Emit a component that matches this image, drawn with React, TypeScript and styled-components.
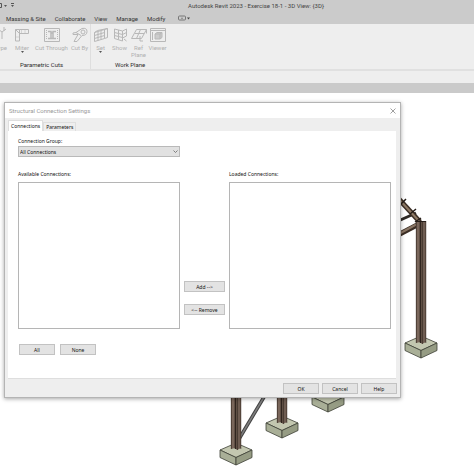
import React, { useState } from "react";
import styled, { createGlobalStyle } from "styled-components";

const Global = createGlobalStyle`
  * { box-sizing: border-box; }
  html, body { margin: 0; background: #fff; }
  body, button, select { font-family: "Noto Sans", "Open Sans", sans-serif; }
`;

const Page = styled.div`
  display: flex;
  flex-direction: column;
  min-height: 100vh;
  overflow: hidden;
`;

const TitleBar = styled.header`
  position: relative;
  display: flex;
  align-items: center;
  justify-content: center;
  height: 11px;
  padding-left: 38px;
  background: #cbcbcb;
  color: #444;
  font-family: Roboto, sans-serif;
  font-size: 6px;
  line-height: 10px;
`;

const QuickAccess = styled.svg`
  position: absolute;
  left: 0;
  top: 0;
`;

const TabBar = styled.nav`
  display: flex;
  align-items: center;
  gap: 9px;
  height: 13px;
  padding: 3px 0 0 6px;
  background: #cbcbcb;
`;

const RibbonTab = styled.button`
  border: 0;
  padding: 0;
  background: none;
  color: #333;
  font-family: Roboto, sans-serif;
  font-size: 6px;
  line-height: 8px;
`;

const Ribbon = styled.section`
  display: flex;
  height: 47px;
  background: #eee;
  border-bottom: 2px solid #e0e0e0;
`;

const RibbonPanel = styled.div<{ $width: number; $divider?: boolean }>`
  display: flex;
  flex-direction: column;
  justify-content: space-between;
  width: ${(p) => p.$width}px;
  overflow: hidden;
  border-right: 1px solid ${(p) => (p.$divider ? "#dedede" : "transparent")};
`;

const Tools = styled.div<{ $columns: string }>`
  display: grid;
  grid-template-columns: ${(p) => p.$columns};
  padding-top: 1px;
`;

const Tool = styled.button<{ $end?: boolean }>`
  display: flex;
  flex-direction: column;
  align-items: ${(p) => (p.$end ? "flex-end" : "center")};
  justify-content: flex-start;
  border: 0;
  padding: 0;
  background: none;
  color: #b0b0b0;
  font-family: Roboto, sans-serif;
  font-size: 6px;
  line-height: 7px;
  white-space: nowrap;
`;

const ToolIcon = styled.svg`
  flex: none;
  width: 16px;
  height: 19px;
  fill: none;
  stroke: #b8b8b8;
  stroke-width: 1;
`;

const Arrow = styled.svg`
  width: 3px;
  height: 2px;
  fill: #555;
`;

const PanelName = styled.div<{ $indent: number }>`
  padding-left: ${(p) => p.$indent}px;
  color: #2c2c2c;
  font-family: Roboto, sans-serif;
  font-size: 6px;
  line-height: 8px;
`;

const OptionsBar = styled.div`
  height: 12px;
  background: #eee;
`;

const ViewBar = styled.div`
  height: 10px;
  background: #cacaca;
`;

const Viewport = styled.main`
  position: relative;
  flex: 1;
  min-height: 376px;
  background: #fff;
`;

const Model = styled.svg`
  display: block;
`;

const Dialog = styled.section`
  position: absolute;
  left: 4px;
  right: 73px;
  top: 9px;
  border: 1px solid #b4b4b4;
  background: #eee;
  box-shadow: 0 1px 4px rgba(0, 0, 0, 0.35);
  color: #111;
  font-size: 5px;
`;

const DialogTitle = styled.header`
  display: flex;
  align-items: center;
  justify-content: space-between;
  height: 15px;
  padding: 0 4px;
  background: #fff;
  color: #999;
  font-family: Roboto, sans-serif;
  font-size: 6px;
  line-height: 8px;
`;

const Close = styled.button`
  display: flex;
  border: 0;
  padding: 0;
  background: none;
`;

const TabStrip = styled.div`
  display: flex;
  align-items: flex-end;
  height: 13px;
  padding-left: 3px;
`;

const DialogTab = styled.button<{ $active: boolean }>`
  height: ${(p) => (p.$active ? 11 : 9)}px;
  padding: 0 2px;
  border: 1px solid #dedede;
  border-bottom: 0;
  background: ${(p) => (p.$active ? "#fff" : "#eee")};
  color: #111;
  font-size: 5px;
  line-height: 8px;
`;

const Sheet = styled.div`
  display: flex;
  flex-direction: column;
  height: 248px;
  margin: 0 4px 0 3px;
  padding: 6px 5px 0 10px;
  border-bottom: 1px solid #dedede;
  background: #fff;
`;

const Transfer = styled.div`
  display: grid;
  grid-template-columns: 1fr 49px 1fr;
`;

const Field = styled.div`
  display: flex;
  flex-direction: column;
`;

const Label = styled.label`
  line-height: 8px;
`;

const GroupSelect = styled.div`
  position: relative;
  margin: 1px 0 13px;
`;

const Select = styled.select`
  display: block;
  appearance: none;
  width: 100%;
  height: 11px;
  padding: 0 1px;
  border: 1px solid #b9b9b9;
  border-radius: 0;
  background: #e1e1e1;
  color: #111;
  font-size: 5px;
  line-height: 8px;
`;

const Chevron = styled.svg`
  position: absolute;
  right: 2px;
  top: 4px;
  pointer-events: none;
`;

const List = styled.div`
  height: 147px;
  margin-top: 4px;
  border: 1px solid #b5b5b5;
  background: #fff;
`;

const Middle = styled.div`
  display: flex;
  flex-direction: column;
  align-items: center;
  gap: 12px;
  padding-top: 111px;
`;

const Button = styled.button<{ $width: number }>`
  width: ${(p) => p.$width}px;
  height: 11px;
  padding: 0;
  border: 1px solid #c2c2c2;
  background: #e3e3e3;
  color: #111;
  font-size: 5px;
  line-height: 8px;
`;

const Row = styled.div<{ $end?: boolean }>`
  display: flex;
  justify-content: ${(p) => (p.$end ? "flex-end" : "flex-start")};
  gap: ${(p) => (p.$end ? 3 : 5)}px;
  padding: ${(p) => (p.$end ? "4px 3px 3px" : "15px 0 0 1px")};
`;

const DownArrow = () => (
  <Arrow viewBox="0 0 3 2"><path d="M0 0H3L1.5 2Z" /></Arrow>
);

const icons: Record<string, React.ReactNode> = {
  Type: <path d="M0 4h7l4 3 4-3M5 5l-3 9M11 7v7M0 13h5M13 2v4" />,
  Miter: <><path d="M1.500 16V4.500h4V16zM5.500 8.500h9v-4h-9M1.500 4.500l4 4" /><path d="M7.500 4.500v4M11 4.500v4M1.500 12h4" strokeDasharray="1 1" /></>,
  "Cut Through": <><path d="M.5 3.500h15v13H.5z" /><path d="M4 6.500h3v1.500h2V6.500h3M4 13.500h8M7 8v5.500M9 8v5.500" strokeWidth="1.500" /><path d="M2.500 5v10M13.500 5v10" strokeDasharray="1 1" /></>,
  "Cut By": <><path d="M4 7.500l6-4q5-1 5 3 0 4-5 4l-5 6H2l4-7H1V8z" /><circle cx="11" cy="7" r="2" /><path d="M4 7.500l5 3" /></>,
  Set: <><path d="M1.500 7.500l10-3v9l-10 3zM4.500 5.500l10-2v9l-3 1M1.500 7.500l3-2M11.500 4.500l3-1" /><path d="M5 6.500v9M8 5.500v9M1.500 10.500l10-3M1.500 13.500l10-3" /></>,
  Show: <><path d="M2.500 4l8 2v10l-8-2.500zM10.500 6l4-2v7l-4 2M6.500 5v9.500M2.500 7.500l8 2 4-2M2.500 10.500l8 2" /><path d="M12 14l2.500 2" /></>,
  Ref: <><path d="M5.500 4.500h10l-5 9h-10zM4 8.500h9M9.500 4.500l-4 9" /><path d="M9 11v5h3M15.500 4.500v4" /></>,
  Viewer: <><path d="M.5 3.500h15v13H.5zM.5 5.500h15" /><path d="M5 9l2-1.500h5v5L10 14H5zM5 9h5v5M10 9l2-1.500" fill="#ccc" /><path d="M2.500 7v8" /></>,
};

const RibbonTool = ({ name, text = name, menu, end }: { name: string; text?: React.ReactNode; menu?: boolean; end?: boolean }) => (
  <Tool type="button" $end={end}>
    <ToolIcon viewBox="0 0 16 19">{icons[name]}</ToolIcon>
    <span>{text}</span>
    {menu && <DownArrow />}
  </Tool>
);

const Footing = ({ x, y }: { x: number; y: number }) => (
  <g transform={`translate(${x} ${y})`} stroke="#3d4036" strokeWidth=".8" strokeLinejoin="round">
    <path d="M-16-15L0-22 16-15 0-7.500z" fill="#c3c7b0" />
    <path d="M-16-15L0-7.500V0L-16-7.500z" fill="#a9af97" />
    <path d="M16-15L0-7.500V0L16-7.500z" fill="#969c84" />
  </g>
);

const Column = ({ x, top, bottom }: { x: number; top: number; bottom: number }) => (
  <g>
    <path d={`M${x - 5} ${top}H${x + 5}V${bottom - 1}L${x + 1} ${bottom + 1}L${x - 1} ${bottom - 1}L${x - 5} ${bottom}Z`} fill="#6f5d52" />
    <path d={`M${x - 0.5} ${top}V${bottom}`} stroke="#30251f" strokeWidth="1.500" />
    <path d={`M${x - 4.7} ${top}V${bottom}M${x + 1.5} ${top}V${bottom + 1}M${x + 4.8} ${top}V${bottom}`} stroke="#3a2e27" strokeWidth=".7" />
    <path d={`M${x - 3} ${top}V${bottom - 1}`} stroke="#8b776b" strokeWidth=".8" />
  </g>
);

const Structure = () => (
  <Model width="474" height="376" viewBox="0 0 474 376" aria-label="Steel structure">
    <Footing x={421} y={265} />
    <g fill="none">
      <path d="M396 129l20-9" stroke="#2e2925" strokeWidth="3" />
      <path d="M396 143l23-12" stroke="#3b2e25" strokeWidth="5" />
      <path d="M396 142.500l22-12" stroke="#8a7665" strokeWidth="2" />
      <path d="M396 103L420 129" stroke="#3b2e25" strokeWidth="5" />
      <path d="M396 103L419 128" stroke="#8f7b66" strokeWidth="2" />
      <path d="M401 111l5-5M410 121l6-5M415 129l6-4" stroke="#241c17" strokeWidth="1.500" />
    </g>
    <Column x={421} top={128} bottom={250} />
    <path d="M416 128.500h10" stroke="#241c17" />
    <Footing x={328} y={319} />
    <Column x={328} top={260} bottom={303} />
    <Footing x={282} y={345} />
    <Column x={282} top={280} bottom={330} />
    <Footing x={236} y={372} />
    <path d="M239 346L267 299" stroke="#414141" strokeWidth="3.500" />
    <path d="M239 346L267 299" stroke="#7d7d7d" strokeWidth="1.500" />
    <Column x={236} top={280} bottom={356} />
  </Model>
);

export default function App() {
  const [tab, setTab] = useState("Connections");
  return (
    <Page>
      <Global />
      <TitleBar>
        <QuickAccess width="16" height="11" viewBox="0 0 16 11" fill="none" stroke="#555">
          <path d="M0 3.500h1.500v4H0" />
          <path d="M4 5h3L5.500 7zM11 5h3l-1.500 2z" fill="#555" stroke="none" />
          <path d="M11 3.500h3" />
        </QuickAccess>
        Autodesk Revit 2023 - Exercise 18-1 - 3D View: {"{3D}"}
      </TitleBar>
      <TabBar>
        {["Massing & Site", "Collaborate", "View", "Manage", "Modify"].map((t) => (
          <RibbonTab type="button" key={t}>{t}</RibbonTab>
        ))}
        <RibbonTab type="button" aria-label="Minimize ribbon">
          <svg width="16" height="6" viewBox="0 0 16 6" fill="none" stroke="#777">
            <rect x="4.500" y="1" width="7" height="4" rx="1" />
            <path d="M7 3.500l1-1 1 1zM13 2.500h3l-1.500 2z" fill="#444" stroke="none" />
          </svg>
        </RibbonTab>
      </TabBar>
      <Ribbon>
        <RibbonPanel $width={91} $divider>
          <Tools $columns="7px 30px 29px 27px">
            <RibbonTool name="Type" end />
            <RibbonTool name="Miter" menu />
            <RibbonTool name="Cut Through" />
            <RibbonTool name="Cut By" />
          </Tools>
          <PanelName $indent={20}>Parametric Cuts</PanelName>
        </RibbonPanel>
        <RibbonPanel $width={80}>
          <Tools $columns="19px 19px 19px 19px">
            <RibbonTool name="Set" menu />
            <RibbonTool name="Show" />
            <RibbonTool name="Ref" text={<>Ref<br />Plane</>} />
            <RibbonTool name="Viewer" />
          </Tools>
          <PanelName $indent={24}>Work Plane</PanelName>
        </RibbonPanel>
      </Ribbon>
      <OptionsBar />
      <ViewBar />
      <Viewport>
        <Structure />
        <Dialog role="dialog" aria-labelledby="dialog-title">
          <DialogTitle>
            <span id="dialog-title">Structural Connection Settings</span>
            <Close type="button" aria-label="Close">
              <svg width="6" height="6" viewBox="0 0 6 6" stroke="#888" strokeWidth=".8"><path d="M.5.500l5 5M5.500.500l-5 5" /></svg>
            </Close>
          </DialogTitle>
          <TabStrip role="tablist">
            {["Connections", "Parameters"].map((t) => (
              <DialogTab type="button" role="tab" key={t} aria-selected={tab === t} $active={tab === t} onClick={() => setTab(t)}>{t}</DialogTab>
            ))}
          </TabStrip>
          <Sheet>
            <Transfer>
              <Field>
                <Label htmlFor="group">Connection Group:</Label>
                <GroupSelect>
                  <Select id="group"><option>All Connections</option></Select>
                  <Chevron width="5" height="4" viewBox="0 0 5 4" fill="none" stroke="#666" strokeWidth=".8"><path d="M.5.500l2 2 2-2" /></Chevron>
                </GroupSelect>
              </Field>
            </Transfer>
            <Transfer>
              <Field>
                <Label id="available">Available Connections:</Label>
                <List role="listbox" aria-labelledby="available" tabIndex={0} />
              </Field>
              <Middle>
                <Button type="button" $width={41}>Add --&gt;</Button>
                <Button type="button" $width={41}>&lt;-- Remove</Button>
              </Middle>
              <Field>
                <Label id="loaded">Loaded Connections:</Label>
                <List role="listbox" aria-labelledby="loaded" tabIndex={0} />
              </Field>
            </Transfer>
            <Row>
              <Button type="button" $width={36}>All</Button>
              <Button type="button" $width={36}>None</Button>
            </Row>
          </Sheet>
          <Row $end>
            <Button type="button" $width={36}>OK</Button>
            <Button type="button" $width={36}>Cancel</Button>
            <Button type="button" $width={36}>Help</Button>
          </Row>
        </Dialog>
      </Viewport>
    </Page>
  );
}
